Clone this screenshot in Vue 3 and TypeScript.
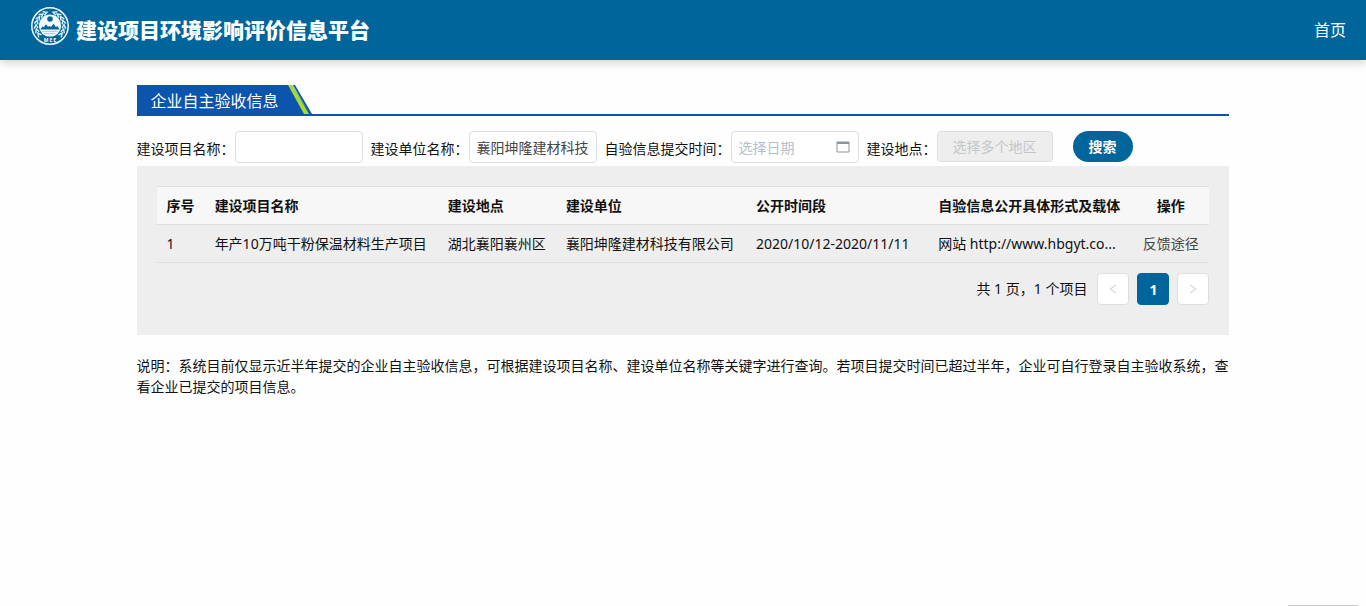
<script setup lang="ts">
import { ref } from 'vue'

interface Acceptance {
  id: number
  project: string
  place: string
  company: string
  period: string
  carrier: string
}

const projectName = ref('')
const companyName = ref('襄阳坤隆建材科技有限公司')
const submitDate = ref('')

const columns: string[] = ['序号', '建设项目名称', '建设地点', '建设单位', '公开时间段', '自验信息公开具体形式及载体', '操作']

const rows: Acceptance[] = [
  {
    id: 1,
    project: '年产10万吨干粉保温材料生产项目',
    place: '湖北襄阳襄州区',
    company: '襄阳坤隆建材科技有限公司',
    period: '2020/10/12-2020/11/11',
    carrier: '网站 http://www.hbgyt.co...',
  },
]

// Angles of the leaves that ring the emblem, leaving the foot free for the letters
const leafAngles: number[] = [-126, -108, -90, -72, -54, -36, -18, 18, 36, 54, 72, 90, 108, 126]
</script>

<template>
  <div class="page">
    <header class="topbar">
      <a class="brand" href="#">
        <svg class="emblem" viewBox="0 0 40 40" aria-hidden="true">
          <circle cx="20" cy="20" r="18.2" fill="none" stroke="#f2faff" stroke-width="1.5" />
          <g v-for="a in leafAngles" :key="a" :transform="`rotate(${a} 20 20)`">
            <path
              :d="a < 0 ? 'M17.4 4.2 L21.4 6 L17.8 8' : 'M22.6 4.2 L18.6 6 L22.2 8'"
              fill="none"
              stroke="#d9eef7"
              stroke-width="1.4"
            />
          </g>
          <circle cx="20" cy="19.6" r="11" fill="#f4fbff" />
          <circle cx="20" cy="13" r="2.8" fill="#00659b" />
          <path
            d="M10.4 23.4 L12.4 20.6 L13.8 21.2 L16 18.2 L18 20.8 L19.4 20 L21 21 L23.6 17.8 L25.8 21 L27.4 20.2 L29.6 23.4 Z"
            fill="#00659b"
          />
          <path d="M12.4 25.4 H27.6 M14.4 27.6 H25.6" stroke="#8cc3dc" stroke-width="0.8" />
          <text x="20.5" y="36" text-anchor="middle" class="letters">MEE</text>
        </svg>
        <span class="brand-name">建设项目环境影响评价信息平台</span>
      </a>
      <nav><a class="home" href="#">首页</a></nav>
    </header>

    <main class="content">
      <div class="section-head">
        <h1>企业自主验收信息</h1>
        <svg class="slant" viewBox="0 0 26 31" aria-hidden="true">
          <path d="M0 0 H8 L25 29 V31 H0 Z" fill="#0b55ad" />
          <path d="M1 0 H5 L22 29 H17 Z" fill="#a6dc2b" />
          <path d="M5 0 H6 L22 28 Z" fill="#dcebd8" />
        </svg>
      </div>

      <form class="search" @submit.prevent>
        <div class="field">
          <label for="project">建设项目名称：</label>
          <input id="project" v-model="projectName" type="text" />
        </div>
        <div class="field">
          <label for="company">建设单位名称：</label>
          <input id="company" v-model="companyName" type="text" />
        </div>
        <div class="field">
          <label for="date">自验信息提交时间：</label>
          <div class="date-box">
            <input id="date" v-model="submitDate" type="text" placeholder="选择日期" />
            <svg viewBox="0 0 14 12" aria-hidden="true">
              <path d="M1 1 H13 V11 H1 Z" fill="none" stroke="#8e949c" stroke-width="1" />
              <path d="M1 2 H13" stroke="#8e949c" stroke-width="2" />
            </svg>
          </div>
        </div>
        <div class="field">
          <label for="area">建设地点：</label>
          <button id="area" class="area" type="button" disabled>选择多个地区</button>
        </div>
        <button class="submit" type="submit">搜索</button>
      </form>

      <section class="panel">
        <table>
          <colgroup>
            <col class="c-id" />
            <col class="c-project" />
            <col class="c-place" />
            <col class="c-company" />
            <col class="c-period" />
            <col class="c-carrier" />
            <col class="c-action" />
          </colgroup>
          <thead>
            <tr>
              <th v-for="c in columns" :key="c" scope="col">{{ c }}</th>
            </tr>
          </thead>
          <tbody>
            <tr v-for="r in rows" :key="r.id">
              <td>{{ r.id }}</td>
              <td>{{ r.project }}</td>
              <td>{{ r.place }}</td>
              <td>{{ r.company }}</td>
              <td>{{ r.period }}</td>
              <td>{{ r.carrier }}</td>
              <td><a class="feedback" href="#">反馈途径</a></td>
            </tr>
          </tbody>
        </table>
        <div class="pager">
          <span class="total">共 1 页，1 个项目</span>
          <button type="button" disabled aria-label="上一页">
            <svg viewBox="0 0 10 10" aria-hidden="true"><path d="M8 1 L2 5 L8 9" /></svg>
          </button>
          <button type="button" class="current">1</button>
          <button type="button" disabled aria-label="下一页">
            <svg viewBox="0 0 10 10" aria-hidden="true"><path d="M2 1 L8 5 L2 9" /></svg>
          </button>
        </div>
      </section>

      <p class="note">
        说明：系统目前仅显示近半年提交的企业自主验收信息，可根据建设项目名称、建设单位名称等关键字进行查询。若项目提交时间已超过半年，企业可自行登录自主验收系统，查看企业已提交的项目信息。
      </p>
    </main>
    <div class="float-edge"></div>
  </div>
</template>

<style>
body {
  background: #fefefe;
}
</style>

<style scoped>
.page {
  font-family: 'Noto Sans', 'Noto Sans CJK SC', sans-serif;
  font-size: 14px;
  line-height: 21px;
  color: #111;
}

.page * {
  box-sizing: border-box;
}

a {
  color: inherit;
  text-decoration: none;
}

input,
button {
  font: inherit;
  margin: 0;
}

.topbar {
  display: flex;
  align-items: center;
  justify-content: space-between;
  height: 60px;
  padding: 0 20px 0 30px;
  background: #00659b;
  color: #fff;
  box-shadow: 0 2px 10px rgba(0, 0, 0, 0.2);
}

.brand {
  display: flex;
  align-items: center;
  gap: 6px;
}

.emblem {
  width: 40px;
  height: 40px;
  margin-bottom: 8px;
}

.letters {
  font-size: 5px;
  font-weight: 700;
  letter-spacing: 1px;
  fill: #fff;
}

.brand-name {
  font-size: 21px;
  line-height: 30px;
  font-weight: 900;
}

.home {
  font-size: 16px;
  line-height: 24px;
}

.content {
  width: 80%;
  margin: 0 auto;
  padding-top: 25px;
}

.section-head {
  display: flex;
  height: 31px;
  border-bottom: 2px solid #0b55ad;
}

.section-head h1 {
  margin: 0;
  padding: 0 8px 0 14px;
  height: 31px;
  background: #0b55ad;
  color: #fff;
  font-size: 16px;
  line-height: 32px;
  font-weight: 400;
}

.slant {
  width: 26px;
  height: 31px;
}

.search {
  display: flex;
  align-items: flex-start;
  gap: 8px;
  padding: 15px 0 3px;
}

.field {
  display: flex;
  white-space: nowrap;
}

.field label {
  padding-top: 7px;
}

.field input {
  width: 128px;
  height: 32px;
  padding: 0 7px;
  border: 1px solid #dcdee6;
  border-radius: 4px;
  background: #fff;
  color: #444;
}

.date-box {
  position: relative;
}

.date-box svg {
  position: absolute;
  top: 10px;
  right: 9px;
  width: 14px;
  height: 12px;
}

.date-box input::placeholder {
  color: #b8bec9;
}

.area {
  width: 116px;
  height: 31px;
  padding: 0;
  border: 1px solid #dcdfe2;
  border-radius: 4px;
  background: #eee;
  color: #c3c6ca;
}

.submit {
  width: 60px;
  height: 31px;
  margin-left: 12px;
  padding: 0;
  border: 0;
  border-radius: 16px;
  background: #00659b;
  color: #fff;
  font-weight: 700;
}

.panel {
  padding: 20px 20px 30px;
  background: #eee;
}

table {
  width: 100%;
  table-layout: fixed;
  border-collapse: collapse;
}

.c-id {
  width: 48px;
}

.c-project {
  width: 233px;
}

.c-place {
  width: 118px;
}

.c-company {
  width: 190px;
}

.c-period {
  width: 182px;
}

.c-carrier {
  width: 204px;
}

.c-action {
  width: 77px;
}

th,
td {
  height: 38px;
  padding: 0 10px;
  border-top: 1px solid #dedede;
  border-bottom: 1px solid #dedede;
  text-align: left;
  white-space: nowrap;
}

th {
  background: #f7f7f7;
  font-weight: 700;
}

th:last-child,
td:last-child {
  text-align: center;
}

.feedback {
  color: #444;
}

.pager {
  display: flex;
  align-items: center;
  justify-content: flex-end;
  gap: 8px;
  padding-top: 10px;
}

.total {
  margin-right: 2px;
  padding-bottom: 2px;
}

.pager button {
  display: flex;
  align-items: center;
  justify-content: center;
  width: 32px;
  height: 32px;
  padding: 0;
  border: 1px solid #dcdee2;
  border-radius: 4px;
  background: #fff;
}

.pager .current {
  border-color: #00659b;
  background: #00659b;
  color: #fff;
  font-weight: 700;
}

.pager svg {
  width: 10px;
  height: 10px;
  fill: none;
  stroke: #ccc;
}

.note {
  margin: 20px 0 0;
}

.float-edge {
  position: fixed;
  right: 8px;
  bottom: 0;
  width: 70px;
  height: 1px;
  background: #ccc;
}
</style>
